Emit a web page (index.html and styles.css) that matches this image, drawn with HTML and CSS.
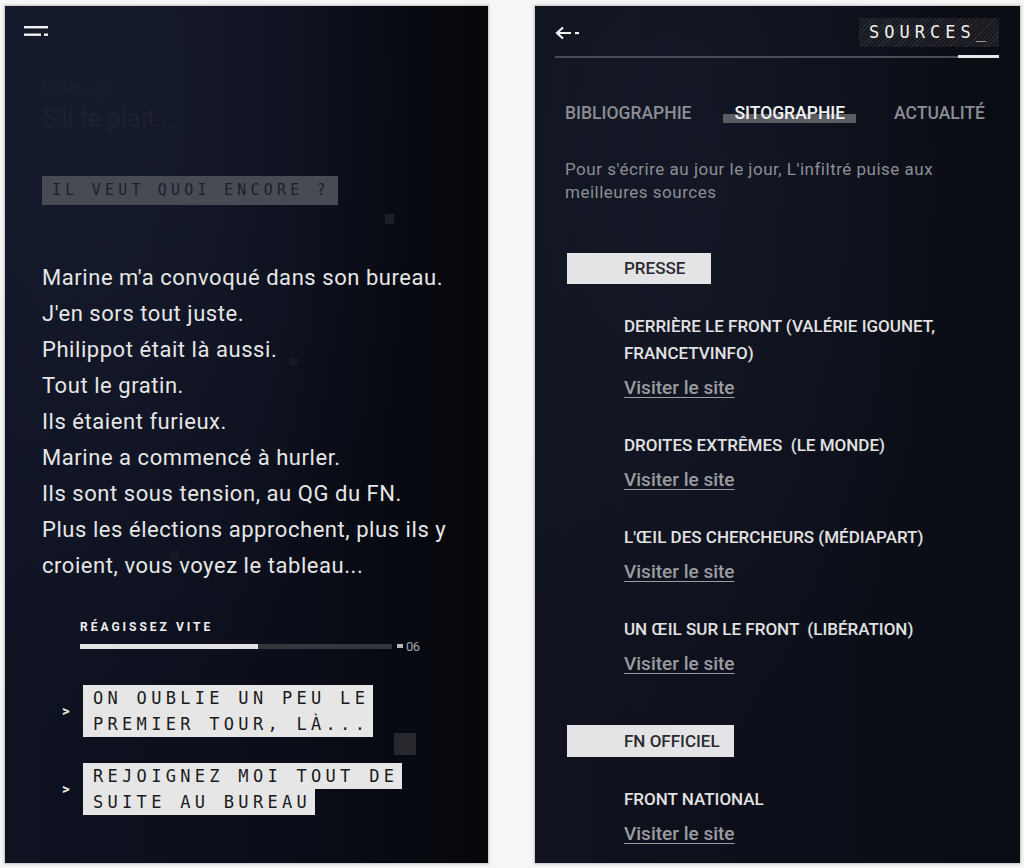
FILE: index.html
```html
<!DOCTYPE html>
<html lang="fr">
<head>
<meta charset="utf-8">
<title>L'infiltré</title>
<link rel="stylesheet" href="styles.css">
</head>
<body>
<main class="screens">
  <section class="phone phone-story">
    <header class="story-top">
      <svg class="menu-icon" width="26" height="12" viewBox="0 0 26 12" aria-hidden="true">
        <rect x="0" y="1" width="24" height="2.4" fill="#f2f2f2"/>
        <rect x="0" y="8.5" width="17" height="2.4" fill="#f2f2f2"/>
        <rect x="20" y="8.5" width="4" height="2.4" fill="#f2f2f2"/>
      </svg>
    </header>
    <div class="ghost">
      <p class="ghost-small">Moi là...</p>
      <p class="ghost-big">S'il te plait...</p>
    </div>
    <div class="prompt"><span>IL VEUT QUOI ENCORE ?</span></div>
    <div class="story">
      <p>Marine m'a convoqué dans son bureau.</p>
      <p>J'en sors tout juste.</p>
      <p>Philippot était là aussi.</p>
      <p>Tout le gratin.</p>
      <p>Ils étaient furieux.</p>
      <p>Marine a commencé à hurler.</p>
      <p>Ils sont sous tension, au QG du FN.</p>
      <p>Plus les élections approchent, plus ils y croient, vous voyez le tableau...</p>
    </div>
    <div class="timer">
      <p class="timer-label">RÉAGISSEZ VITE</p>
      <div class="timer-row">
        <div class="timer-bar"><div class="timer-fill" style="width:57%"></div></div>
        <span class="timer-mark"></span>
        <span class="timer-count">06</span>
      </div>
    </div>
    <ul class="choices">
      <li class="choice"><span class="chev">&gt;</span><span class="choice-text"><span class="hl">ON OUBLIE UN PEU LE</span><br><span class="hl">PREMIER TOUR, LÀ...</span></span></li>
      <li class="choice"><span class="chev">&gt;</span><span class="choice-text"><span class="hl">REJOIGNEZ MOI TOUT DE</span><br><span class="hl">SUITE AU BUREAU</span></span></li>
    </ul>
    <span class="speck speck-1"></span>
    <span class="speck speck-2"></span>
    <span class="speck speck-3"></span>
    <span class="speck speck-4"></span>
  </section>

  <section class="phone phone-sources">
    <header class="src-top">
      <svg class="back-icon" width="26" height="14" viewBox="0 0 26 14" aria-hidden="true">
        <path d="M2 7 H16 M8 1.5 L2 7 L8 12.5" fill="none" stroke="#f2f2f2" stroke-width="2.2"/>
        <rect x="20" y="6" width="4" height="2.2" fill="#f2f2f2"/>
      </svg>
      <div class="src-title">SOURCES_</div>
    </header>
    <div class="src-rule"><span class="src-rule-active"></span></div>
    <nav class="tabs">
      <span class="tab">BIBLIOGRAPHIE</span>
      <span class="tab tab-active">SITOGRAPHIE</span>
      <span class="tab">ACTUALITÉ</span>
    </nav>
    <p class="intro">Pour s'écrire au jour le jour, L'infiltré puise aux meilleures sources</p>

    <div class="cat">PRESSE</div>
    <ul class="entries">
      <li class="entry"><p class="entry-title">DERRIÈRE LE FRONT (VALÉRIE IGOUNET, FRANCETVINFO)</p><a class="visit">Visiter le site</a></li>
      <li class="entry"><p class="entry-title">DROITES EXTRÊMES &nbsp;(LE MONDE)</p><a class="visit">Visiter le site</a></li>
      <li class="entry"><p class="entry-title">L'ŒIL DES CHERCHEURS (MÉDIAPART)</p><a class="visit">Visiter le site</a></li>
      <li class="entry"><p class="entry-title">UN ŒIL SUR LE FRONT &nbsp;(LIBÉRATION)</p><a class="visit">Visiter le site</a></li>
    </ul>
    <div class="cat cat-fn">FN OFFICIEL</div>
    <ul class="entries entries-fn">
      <li class="entry"><p class="entry-title">FRONT NATIONAL</p><a class="visit">Visiter le site</a></li>
    </ul>
  </section>
</main>
</body>
</html>
```

FILE: styles.css
```css
* { box-sizing: border-box; }
html, body { margin: 0; padding: 0; }
body {
  background: #f6f6f6;
  font-family: Roboto, "Noto Sans", sans-serif;
  width: 1024px;
  height: 868px;
  overflow: hidden;
}
p { margin: 0; }
ul { list-style: none; margin: 0; padding: 0; }

.screens {
  display: flex;
  gap: 45px;
  padding: 5px 0 0 4px;
}

.phone {
  position: relative;
  height: 859px;
  border: 1px solid #cfcfcf;
  box-shadow: 0 0 3px rgba(0,0,0,0.18);
  overflow: hidden;
}

/* ---------- left: story ---------- */
.phone-story {
  width: 485px;
  padding: 0 0 0 37px;
  background:
    radial-gradient(ellipse at 20% 10%, rgba(30,36,58,0.55), rgba(0,0,0,0) 60%),
    linear-gradient(90deg, #0e1221 0%, #0b0e1a 55%, #05070b 100%);
}
.story-top { height: 52px; padding: 19px 0 0 0; margin-left: -18px; }
.menu-icon { display: block; }

.ghost { color: #1d2132; }
.ghost-small { font-size: 14px; margin-top: 20px; height: 18px; color: #1b1f2e; }
.ghost-big { font-size: 25px; margin-top: 8px; height: 30px; }

.prompt { margin-top: 42px; }
.prompt span {
  display: inline-block;
  background: #484b53;
  color: #1d2029;
  font-family: "DejaVu Sans Mono", monospace;
  font-size: 15px;
  letter-spacing: 4.2px;
  padding: 5px 8px 5px 10px;
  line-height: 19px;
}

.story {
  margin-top: 55px;
  width: 420px;
  color: #e6e6e6;
  font-size: 22px;
  letter-spacing: 0.55px;
  line-height: 36px;
}

.timer { margin: 36px 0 0 38px; width: 360px; }
.timer-label {
  color: #f0f0f0;
  font-size: 12px;
  font-weight: 700;
  letter-spacing: 3px;
  line-height: 14px;
}
.timer-row { display: flex; align-items: center; margin-top: 5px; height: 14px; }
.timer-bar { width: 312px; height: 5px; background: #34363b; }
.timer-fill { height: 100%; background: #e2e2e2; }
.timer-mark { width: 6px; height: 4px; background: #b8b8b8; margin-left: 5px; }
.timer-count { color: #a8a8ab; font-size: 13px; margin-left: 3px; letter-spacing: -0.5px; }

.choices { margin: 32px 0 0 20px; display: flex; flex-direction: column; gap: 26px; }
.choice { display: flex; align-items: center; gap: 13px; }
.chev { color: #e8e8e8; font-size: 15px; font-weight: 700; width: 8px; }
.choice-text {
  font-family: "DejaVu Sans Mono", monospace;
  font-size: 17px;
  line-height: 26px;
  letter-spacing: 4.3px;
  color: #1a1b20;
}
.hl {
  background: #e6e6e6;
  padding: 3px 4px 3px 10px;
}

.speck { position: absolute; background: #22252d; }
.speck-1 { left: 380px; top: 208px; width: 9px; height: 10px; background: #1c1f29; }
.speck-2 { left: 284px; top: 352px; width: 8px; height: 8px; background: #161924; }
.speck-3 { left: 165px; top: 545px; width: 9px; height: 9px; background: #161924; }
.speck-4 { left: 389px; top: 727px; width: 22px; height: 22px; background: #26282d; }

/* ---------- right: sources ---------- */
.phone-sources {
  width: 487px;
  padding: 0 21px 0 30px;
  background:
    radial-gradient(ellipse at 30% 20%, rgba(26,31,48,0.5), rgba(0,0,0,0) 60%),
    linear-gradient(90deg, #10131f 0%, #0c0f19 60%, #0a0c13 100%);
}
.src-top {
  display: flex;
  justify-content: space-between;
  align-items: center;
  height: 50px;
  padding-top: 2px;
  margin-left: -10px;
}
.back-icon { display: block; margin-top: 2px; }
.src-title {
  width: 140px;
  height: 29px;
  background: repeating-linear-gradient(135deg, #2a2c33 0 1px, #17191f 1px 3px);
  color: #f0f0f0;
  font-family: "DejaVu Sans Mono", monospace;
  font-size: 17px;
  letter-spacing: 5px;
  line-height: 29px;
  padding-left: 10px;
  margin-top: 1px;
}
.src-rule {
  position: relative;
  height: 2px;
  background: #4b4d55;
  margin-left: -10px;
  display: flex;
  justify-content: flex-end;
}
.src-rule-active { width: 41px; height: 3px; margin-top: -1px; background: #e8e8e8; }

.tabs {
  display: flex;
  justify-content: space-between;
  margin: 45px 14px 0 0;
  font-size: 17.5px;
  font-weight: 500;
  color: #8c8d93;
  line-height: 20px;
}
.tab-active {
  color: #f2f2f2;
  padding: 0 11px;
  background: linear-gradient(to bottom, transparent 0 55%, #5a5c62 55% 100%);
  margin-left: 18px;
  margin-right: 24px;
}
.intro {
  margin-top: 35px;
  color: #8d8e94;
  font-size: 17px;
  letter-spacing: 0.5px;
  line-height: 23px;
  width: 400px;
}

.cat {
  margin-top: 49px;
  margin-left: 2px;
  width: 144px;
  height: 31px;
  background: #e4e4e6;
  color: #2a2b30;
  font-size: 17px;
  font-weight: 500;
  line-height: 31px;
  padding-left: 57px;
}
.cat-fn { width: 167px; height: 32px; line-height: 32px; margin-top: 50px; }

.entries { padding-left: 59px; margin-top: 29px; }
.entries-fn { margin-top: 29px; }
.entry { margin-bottom: 33px; }
.entry:last-child { margin-bottom: 0; }
.entry-title {
  color: #e2e2e2;
  font-size: 17px;
  font-weight: 500;
  line-height: 27px;
  width: 340px;
}
.visit {
  display: inline-block;
  margin-top: 10px;
  color: #9b9ba0;
  font-size: 19px;
  font-weight: 500;
  text-decoration: underline;
  text-underline-offset: 3px;
  line-height: 22px;
}
```
